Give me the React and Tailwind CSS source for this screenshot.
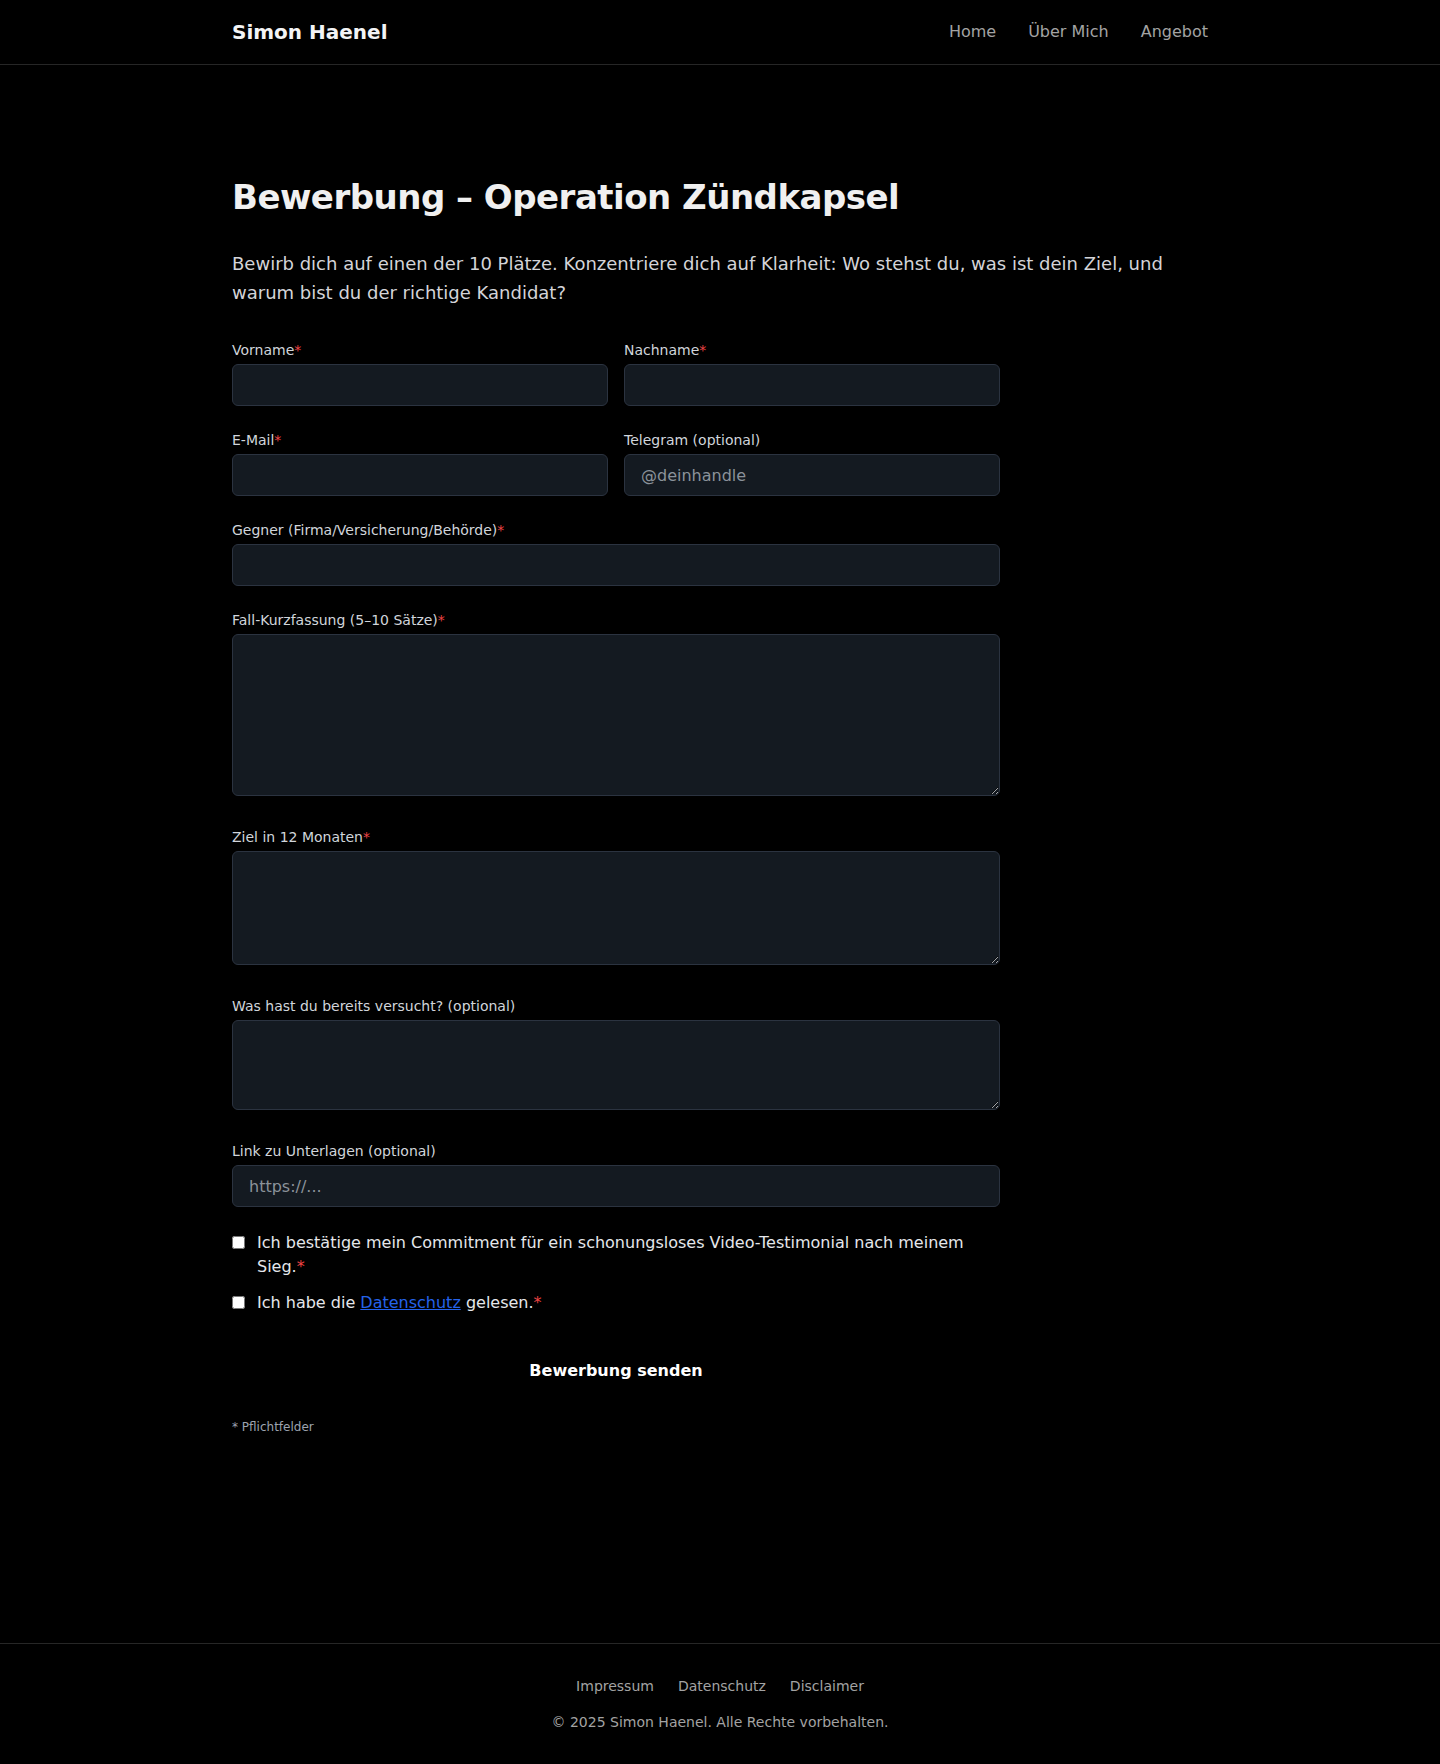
export default function App() {
  const inputCls =
    "block w-full h-[42px] rounded-md border border-[#2b3340] bg-[#141a21] px-4 py-2 text-base leading-6 text-gray-100 placeholder:text-[#8b929a] outline-none";
  const areaCls =
    "w-full rounded-md border border-[#2b3340] bg-[#141a21] px-4 py-2 text-base leading-6 text-gray-100 placeholder:text-[#8b929a] outline-none align-baseline";
  const labelCls = "block mb-1 text-sm leading-5 text-[#d1d5db]";
  const Star = () => <span className="text-[#ef4444]">*</span>;

  return (
    <div className="min-h-screen bg-black font-['DejaVu_Sans',sans-serif] text-gray-100">
      {/* Header */}
      <header className="border-b border-[#262626]">
        <div className="mx-auto flex h-16 max-w-5xl items-center justify-between px-6">
          <span className="text-xl font-bold text-gray-100">Simon Haenel</span>
          <nav className="flex items-center gap-8 text-base text-[#a3a3a3]">
            <a href="#">Home</a>
            <a href="#">Über Mich</a>
            <a href="#">Angebot</a>
          </nav>
        </div>
      </header>

      {/* Inhalt */}
      <main className="mx-auto max-w-5xl px-6 pt-28 pb-[208px]">
        <h1 className="mb-8 text-[34px] font-bold leading-[1.2] tracking-[-0.015em] text-[#f0f0f0]">
          Bewerbung – Operation Zündkapsel
        </h1>
        <p className="mb-[33px] text-lg leading-[1.6] text-[#d4d4d8]">
          Bewirb dich auf einen der 10 Plätze. Konzentriere dich auf Klarheit: Wo stehst du, was ist dein Ziel, und
          warum bist du der richtige Kandidat?
        </p>

        <form className="flex max-w-3xl flex-col gap-6" onSubmit={(e) => e.preventDefault()}>
          <div className="grid grid-cols-2 gap-4">
            <div>
              <label className={labelCls}>
                Vorname<Star />
              </label>
              <input className={inputCls} />
            </div>
            <div>
              <label className={labelCls}>
                Nachname<Star />
              </label>
              <input className={inputCls} />
            </div>
          </div>

          <div className="grid grid-cols-2 gap-4">
            <div>
              <label className={labelCls}>
                E-Mail<Star />
              </label>
              <input className={inputCls} type="email" />
            </div>
            <div>
              <label className={labelCls}>Telegram (optional)</label>
              <input className={inputCls} placeholder="@deinhandle" />
            </div>
          </div>

          <div>
            <label className={labelCls}>
              Gegner (Firma/Versicherung/Behörde)<Star />
            </label>
            <input className={inputCls} />
          </div>

          <div>
            <label className={labelCls}>
              Fall-Kurzfassung (5–10 Sätze)<Star />
            </label>
            <textarea className={areaCls} rows={6} />
          </div>

          <div>
            <label className={labelCls}>
              Ziel in 12 Monaten<Star />
            </label>
            <textarea className={areaCls} rows={4} />
          </div>

          <div>
            <label className={labelCls}>Was hast du bereits versucht? (optional)</label>
            <textarea className={areaCls} rows={3} />
          </div>

          <div>
            <label className={labelCls}>Link zu Unterlagen (optional)</label>
            <input className={inputCls} placeholder="https://..." />
          </div>

          <div className="flex flex-col gap-3 text-base leading-6 text-[#e5e7eb]">
            <label className="flex items-start gap-3">
              <input type="checkbox" className="mt-[5px] h-[13px] w-[13px] shrink-0" />
              <span>
                Ich bestätige mein Commitment für ein schonungsloses Video-Testimonial nach meinem Sieg.<Star />
              </span>
            </label>
            <label className="flex items-start gap-3">
              <input type="checkbox" className="mt-[5px] h-[13px] w-[13px] shrink-0" />
              <span>
                Ich habe die{" "}
                <a href="#" className="text-[#2563eb] underline">
                  Datenschutz
                </a>{" "}
                gelesen.<Star />
              </span>
            </label>
          </div>

          <button type="submit" className="mt-2 w-full py-3 text-base font-bold leading-6 text-white">
            Bewerbung senden
          </button>

          <p className="text-xs leading-4 text-[#9ca3af]">* Pflichtfelder</p>
        </form>
      </main>

      {/* Footer */}
      <footer className="border-t border-[#262626] py-8 text-center text-sm leading-5 text-[#a3a3a3]">
        <div className="flex justify-center gap-6">
          <a href="#">Impressum</a>
          <a href="#">Datenschutz</a>
          <a href="#">Disclaimer</a>
        </div>
        <p className="mt-4">© 2025 Simon Haenel. Alle Rechte vorbehalten.</p>
      </footer>
    </div>
  );
}
